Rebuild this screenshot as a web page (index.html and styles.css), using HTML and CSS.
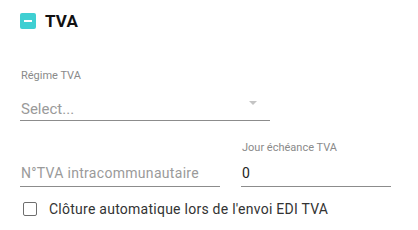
FILE: index.html
```html
<!DOCTYPE html>
<html>
<head>
<meta charset="utf-8">
<link rel="stylesheet" href="styles.css">
</head>
<body>
<div class="panel">
  <div class="header">
    <span class="toggle"><span class="bar"></span></span>
    <span class="title">TVA</span>
  </div>
  <div class="field select-field">
    <label class="label">Régime TVA</label>
    <div class="input select">
      <span class="placeholder">Select...</span>
      <span class="arrow"></span>
    </div>
  </div>
  <div class="row">
    <div class="field intra">
      <label class="label empty"></label>
      <div class="input"><span class="placeholder big">N°TVA intracommunautaire</span></div>
    </div>
    <div class="field jour">
      <label class="label">Jour échéance TVA</label>
      <div class="input"><span class="value">0</span></div>
    </div>
  </div>
  <div class="check">
    <span class="box"></span>
    <span class="check-label">Clôture automatique lors de l'envoi EDI TVA</span>
  </div>
</div>
</body>
</html>
```
FILE: styles.css
```css
html, body { margin: 0; padding: 0; background: #fff; }
body { font-family: Roboto, "Noto Sans", sans-serif; }
.panel { padding: 12px 20px 0 20px; display: flex; flex-direction: column; }
.header { display: flex; align-items: center; height: 18px; gap: 9px; }
.toggle { width: 16px; height: 16px; border-radius: 2px; background: #3fcfd2; display: flex; align-items: center; justify-content: center; }
.toggle .bar { width: 8px; height: 2px; background: #fff; }
.title { font-size: 17px; font-weight: 700; color: #111; letter-spacing: 0.2px; }
.field { display: flex; flex-direction: column; }
.select-field { width: 250px; margin-top: 40px; }
.label { font-size: 11px; color: #8a8a8a; height: 12px; line-height: 12px; padding-left: 1px; }
.input { border-bottom: 1px solid #8c8c8c; height: 30px; display: flex; align-items: center; padding-left: 1px; position: relative; }
.select { margin-top: 12px; height: 26px; align-items: flex-end; padding-bottom: 2px; box-sizing: border-box; height: 27px; }
.placeholder { font-size: 15px; color: #9a9a9a; }
.placeholder.big { font-size: 14px; letter-spacing: 0.3px; }
.arrow { position: absolute; right: 13px; top: 7px; width: 0; height: 0; border-left: 4px solid transparent; border-right: 4px solid transparent; border-top: 4px solid #c4c4c4; }
.row { display: flex; gap: 21px; margin-top: 21px; }
.intra { width: 200px; }
.jour { width: 150px; }
.row .input { margin-top: 6px; height: 26px; }
.value { font-size: 14px; color: #222; }
.check { display: flex; align-items: center; gap: 12px; margin-top: 14px; padding-left: 3px; }
.box { width: 12px; height: 12px; border: 1.5px solid #6e6e6e; border-radius: 2px; }
.check-label { font-size: 14px; color: #333; letter-spacing: 0.25px; }
```
